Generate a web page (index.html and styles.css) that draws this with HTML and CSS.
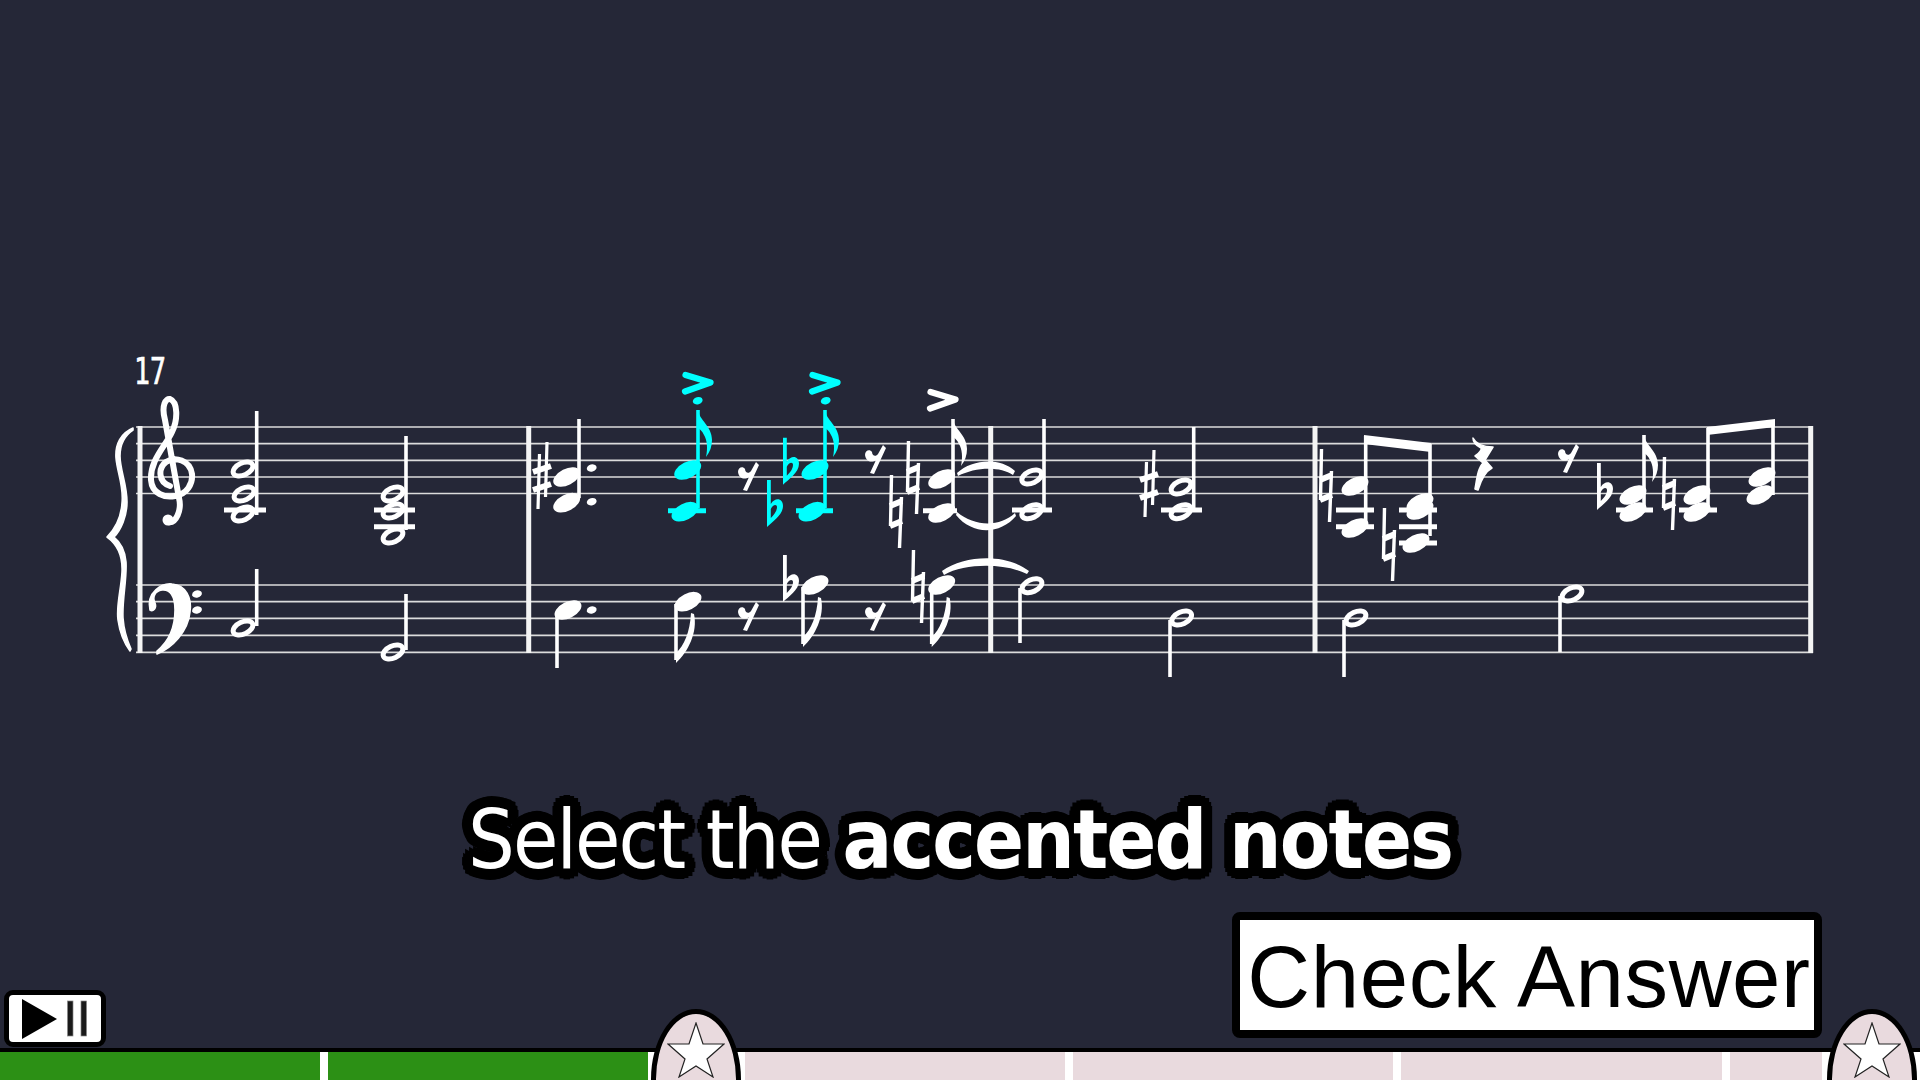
FILE: index.html
```html
<!DOCTYPE html>
<html lang="en">
<head>
<meta charset="utf-8">
<title>Select the accented notes</title>
<link rel="stylesheet" href="styles.css">
</head>
<body>
<main class="stage">
<svg class="score" viewBox="0 0 1920 700" width="1920" height="700" aria-label="Piano score, measures 17 to 20">
  <defs>
    <g id="head"><ellipse rx="14.5" ry="8.2" transform="rotate(-27)" fill="currentColor"/></g>
    <g id="open"><ellipse rx="10.5" ry="6" transform="rotate(-25)" fill="none" stroke="currentColor" stroke-width="5"/></g>
    <path id="flat" fill="currentColor" fill-rule="evenodd" d="M0 0H3.8V24C8 17 16 18 16 26C16 35 5 42 0 47ZM3.8 29V38C7 35 10 31 10 27C10 24 6 24 3.8 29Z"/>
    <g id="natural" fill="none" stroke="currentColor">
      <path stroke-width="3.4" d="M2.5 0L1.5 51M12.5 22L10.5 73"/>
      <path stroke-width="6" d="M1 31L13 26M1 51L13 46"/>
    </g>
    <g id="sharp" fill="none" stroke="currentColor">
      <path stroke-width="3.2" d="M6.5 12L5 67M14 0L12.5 55"/>
      <path stroke-width="6" d="M0 30L18 24M0 48L18 42"/>
    </g>
    <path id="rest" fill="currentColor" d="M0 10C0 5 5 4 7 7C7 11 11 12 13 9L18 0L21 3L9 29L5 28L11 15C7 18 1 17 0 10Z"/>
    <path id="flag-up" fill="currentColor" d="M0 0C1 10 14 16 14 30C14 36 12 42 8 47C10 38 9 30 6 25C4 21 2 19 0 18Z"/>
    <path id="flag-down" fill="currentColor" d="M0 3V-7C8 -14 14 -28 15 -47L18 -46C22 -28 12 -8 0 3Z"/>
    <path id="accent" fill="none" stroke="currentColor" stroke-width="6.2" stroke-linecap="round" stroke-linejoin="round" d="M3.5 3L28.5 10.5L3 19.5"/>
    <ellipse id="dot" rx="5" ry="3.6" transform="rotate(-15)" fill="currentColor"/>
  </defs>

  <g class="staff">
    <path d="M136 427H1813M136 443.7H1813M136 460.3H1813M136 477H1813M136 493.5H1813"/>
    <path d="M136 585H1813M136 601.7H1813M136 618.3H1813M136 635.3H1813M136 652.3H1813"/>
  </g>
  <g class="bars">
    <path d="M140 426V653M528.7 426V653M990.7 426V653M1315 426V653M1810.7 426V653"/>
  </g>

  <path class="ink solid heavy" d="M133 428C121 433 115 444 116 458C117 472 124 486 122 503C121 518 114 530 107 537C114 542 123 552 122 572C121 590 116 606 118 620C120 634 124 643 130 651L131 649C127 640 124 632 123 618C122 600 127 580 126 562C125 549 119 541 114 537C121 530 127 516 127 502C127 484 120 470 120 456C120 445 124 436 133 430Z"/>

  <text class="barnum" x="134" y="384" textLength="32" lengthAdjust="spacingAndGlyphs">17</text>

  <g class="ink">
    <!-- clefs -->
    <path class="clef" d="M168 522C176 524 182 510 179 498L165 420C161 405 166 398 170 399C178 402 178 420 172 432C165 447 150 460 151 480C152 494 165 498 175 496C187 494 193 484 192 474C190 460 175 456 166 462C158 468 158 482 170 486"/>
    <circle class="solid" cx="168" cy="520" r="5.5"/>
    <path class="solid heavy" d="M150 610C146 592 162 583 172 584C186 585 192 598 190 612C188 632 172 648 157 654L157 651C168 642 175 628 175 610C175 596 170 589 162 590C155 591 152 597 155 603C157 608 153 612 150 610Z"/>
    <use href="#dot" x="197" y="594"/>
    <use href="#dot" x="197" y="610"/>

    <!-- measure 17 treble -->
    <path class="stem" d="M256.7 411V515M406 436V530"/>
    <path class="ledger" d="M224 510H266M374 510H415M374 526.7H415"/>
    <use href="#open" x="243" y="469"/><use href="#open" x="244" y="494"/><use href="#open" x="243" y="514"/>
    <use href="#open" x="393" y="494"/><use href="#open" x="393" y="511"/><use href="#open" x="393" y="536"/>
    <!-- measure 17 bass -->
    <path class="stem" d="M256.7 569V626M406 594V650"/>
    <use href="#open" x="243" y="628"/><use href="#open" x="393" y="652"/>

    <!-- measure 18 treble -->
    <use href="#sharp" x="533" y="442"/>
    <use href="#head" x="566.7" y="477"/><use href="#head" x="566.7" y="502.7"/>
    <path class="stem" d="M579 419V498"/>
    <use href="#dot" x="591.7" y="468"/><use href="#dot" x="591.7" y="501.7"/>
    <use href="#rest" x="738" y="462"/>
    <use href="#rest" x="865" y="445"/>
    <use href="#natural" x="889" y="475"/>
    <use href="#natural" x="906" y="441"/>
    <use href="#head" x="941.7" y="479"/><use href="#head" x="941.7" y="513"/>
    <path class="stem" d="M953 419V510"/>
    <use href="#flag-up" x="953" y="419"/>
    <path class="ledger" d="M923 510.7H957"/>
    <use href="#accent" x="927" y="389"/>

    <!-- measure 18 bass -->
    <use href="#head" x="568" y="610"/>
    <path class="stem" d="M557 612V668"/>
    <use href="#dot" x="591.7" y="610"/>
    <use href="#head" x="688" y="601.7"/>
    <path class="stem" d="M676 604V660"/><use href="#flag-down" x="676" y="660"/>
    <use href="#rest" x="738" y="602"/>
    <use href="#flat" x="783" y="555"/>
    <use href="#head" x="815" y="585"/>
    <path class="stem" d="M803 587V644"/><use href="#flag-down" x="803" y="644"/>
    <use href="#rest" x="865" y="602"/>
    <use href="#natural" x="911" y="550"/>
    <use href="#head" x="941.7" y="585"/>
    <path class="stem" d="M931.7 587V644"/><use href="#flag-down" x="931.7" y="644"/>

    <!-- ties -->
    <path class="solid" d="M957 473C972 459 1000 457 1015 471L1013 475C1000 466 975 467 958 476Z"/>
    <path class="solid" d="M957 512C975 527 1000 527 1015 513L1016 516C1000 535 972 535 956 515Z"/>
    <path class="solid" d="M942 571C965 555 1005 553 1029 571L1027 574C1005 563 965 563 944 575Z"/>

    <!-- measure 19 -->
    <use href="#open" x="1031.7" y="477"/><use href="#open" x="1031.7" y="511.7"/>
    <path class="stem" d="M1044 419V510"/>
    <path class="ledger" d="M1012 510H1052M1161 510H1202"/>
    <use href="#sharp" x="1140" y="450"/>
    <use href="#open" x="1181" y="487"/><use href="#open" x="1181" y="511.7"/>
    <path class="stem" d="M1193.7 427V510"/>
    <use href="#open" x="1032" y="585.7"/>
    <path class="stem" d="M1020 588V643"/>
    <use href="#open" x="1181.7" y="618"/>
    <path class="stem" d="M1170 620V677"/>

    <!-- measure 20 treble -->
    <use href="#natural" x="1319" y="449"/>
    <use href="#head" x="1355" y="486"/><use href="#head" x="1355" y="528"/>
    <path class="stem thin" d="M1365.7 436V522M1430 444V536"/>
    <polygon class="solid" points="1364,435 1431,443 1431,452 1364,444"/>
    <path class="ledger" d="M1336 510H1374M1336 526.7H1374M1399 510H1437M1399 526.7H1437M1399 543H1437"/>
    <use href="#natural" x="1382" y="508"/>
    <use href="#head" x="1420" y="503"/><use href="#head" x="1420" y="510"/><use href="#head" x="1416" y="543"/>
    <path class="solid heavy" d="M1473 438C1476 444 1482 447 1493 447L1485 460L1492 468C1486 471 1481 480 1478 490L1475 489C1477 478 1478 468 1483 463L1475 456C1480 453 1482 449 1481 448C1477 446 1473 443 1473 438Z"/>
    <use href="#rest" x="1558" y="444"/>
    <use href="#flat" x="1597" y="463"/>
    <use href="#head" x="1633" y="495"/><use href="#head" x="1633" y="512"/>
    <path class="stem" d="M1644 435V510"/><use href="#flag-up" x="1644" y="435"/>
    <path class="ledger" d="M1616 510H1653M1679 510H1717"/>
    <use href="#natural" x="1662" y="457"/>
    <use href="#head" x="1697" y="495"/><use href="#head" x="1697" y="512"/>
    <path class="stem thin" d="M1708 428V510M1773 420V495"/>
    <polygon class="solid" points="1707,427 1775,419 1775,427 1707,435"/>
    <use href="#head" x="1762" y="477"/><use href="#head" x="1760" y="495"/>
    <use href="#open" x="1572" y="594"/>
    <path class="stem" d="M1560 596V652"/>
    <use href="#open" x="1356" y="618"/>
    <path class="stem" d="M1344 620V677"/>
  </g>

  <g class="ink cyan">
    <use href="#accent" x="682" y="372"/>
    <use href="#dot" x="697.7" y="400.7"/>
    <path class="stem" d="M698 410V508"/><use href="#flag-up" x="698" y="410"/>
    <use href="#head" x="687.7" y="470"/><use href="#head" x="685" y="511.7"/>
    <path class="ledger" d="M668 510.7H706"/>
    <use href="#flat" x="767" y="480"/>
    <use href="#flat" x="783" y="437.7"/>
    <use href="#accent" x="809" y="372"/>
    <use href="#dot" x="825.7" y="400.7"/>
    <path class="stem" d="M825 410V508"/><use href="#flag-up" x="825" y="410"/>
    <use href="#head" x="815" y="470"/><use href="#head" x="812" y="511.7"/>
    <path class="ledger" d="M796 510.7H833"/>
  </g>
</svg>

<h1 class="prompt">Select the <strong>accented notes</strong></h1>

<div class="controls">
  <button class="play" type="button" aria-label="Play or pause">
    <svg class="play-icon" viewBox="0 0 66 40" width="66" height="40">
      <polygon points="0,0 35,20 0,40"/>
      <rect x="45.5" y="2" width="5.5" height="35"/>
      <rect x="59" y="2" width="5.5" height="35"/>
    </svg>
  </button>
  <button class="check" type="button">Check Answer</button>
</div>

<div class="progress">
  <div class="seg done"></div>
  <div class="seg done"></div>
  <div class="seg star-cell">
    <div class="bubble">
      <svg class="star" viewBox="0 0 58 56" width="58" height="56"><polygon points="29,1 36,22 57,22 40,37 46,55 29,44 12,55 18,37 1,22 22,22"/></svg>
    </div>
  </div>
  <div class="seg"></div>
  <div class="seg"></div>
  <div class="seg wide"></div>
  <div class="seg short"></div>
  <div class="seg star-cell">
    <div class="bubble">
      <svg class="star" viewBox="0 0 58 56" width="58" height="56"><polygon points="29,1 36,22 57,22 40,37 46,55 29,44 12,55 18,37 1,22 22,22"/></svg>
    </div>
  </div>
</div>
</main>
</body>
</html>
```
FILE: styles.css
```css
* { box-sizing: border-box; }
html, body { margin: 0; padding: 0; }
body { background: #252737; }
.stage {
  width: 1920px;
  height: 1080px;
  overflow: hidden;
  display: flex;
  flex-direction: column;
  background: #252737;
  font-family: "Liberation Sans", Arial, sans-serif;
}
.score { display: block; flex: none; color: #fff; }
.staff path { fill: none; stroke: #dcdcdc; stroke-width: 1.7; }
.bars path { fill: none; stroke: #f4f4f4; stroke-width: 5; }
.ink { color: #fff; }
.cyan { color: #00ffff; }
.solid { fill: currentColor; }
.heavy { stroke: currentColor; stroke-width: 1.6; stroke-linejoin: round; }
.clef { fill: none; stroke: currentColor; stroke-width: 6; stroke-linecap: round; }
.stem { fill: none; stroke: currentColor; stroke-width: 3.6; }
.ledger { fill: none; stroke: currentColor; stroke-width: 5; }
.barnum {
  font-family: "DejaVu Sans Mono", monospace;
  font-size: 38px;
  fill: #fff;
  stroke: #fff;
  stroke-width: 0.7;
}
.prompt {
  margin: 0;
  height: 212px;
  flex: none;
  padding-top: 90px;
  text-align: center;
  font-family: "DejaVu Sans", sans-serif;
  font-stretch: condensed;
  font-size: 82px;
  font-weight: 400;
  line-height: 100px;
  letter-spacing: -1.9px;
  color: #fff;
  text-shadow:
    11px 0 #000, 10px 4px #000, 8px 8px #000, 4px 10px #000,
    0 11px #000, -4px 10px #000, -8px 8px #000, -10px 4px #000,
    -11px 0 #000, -10px -4px #000, -8px -8px #000, -4px -10px #000,
    0 -11px #000, 4px -10px #000, 8px -8px #000, 10px -4px #000,
    5px 0 #000, -5px 0 #000, 0 5px #000, 0 -5px #000;
}
.prompt strong { font-weight: 700; }
.controls {
  flex: none;
  height: 136px;
  display: flex;
  justify-content: space-between;
  align-items: flex-end;
  padding: 0 98px 0 4px;
}
.play {
  width: 102px;
  height: 57px;
  margin-bottom: 1px;
  padding: 0 0 0 13px;
  display: flex;
  align-items: center;
  background: #fff;
  border: 5px solid #000;
  border-radius: 9px;
  cursor: pointer;
}
.play-icon { fill: #000; display: block; }
.play-icon rect { fill: #1a1a1a; stroke: #888; stroke-width: 0.7; }
.check {
  width: 590px;
  height: 126px;
  margin-bottom: 10px;
  padding: 4px 0 0 4px;
  background: #fff;
  border: 8px solid #000;
  border-radius: 8px;
  font-family: "Liberation Sans", Arial, sans-serif;
  font-size: 87px;
  letter-spacing: 0.6px;
  color: #000;
  cursor: pointer;
  white-space: nowrap;
}
.progress {
  flex: none;
  height: 32px;
  display: flex;
  gap: 8px;
  border-top: 4px solid #000;
  background: #fff;
}
.seg { flex: none; width: 320px; background: #e9dade; }
.seg.wide { width: 321px; }
.seg.done { background: #2c9015; }
.seg.short { width: 92px; }
.star-cell { width: 81px; position: relative; }
.bubble {
  position: absolute;
  left: -5px;
  top: -43px;
  width: 90px;
  height: 140px;
  border: 5px solid #000;
  border-radius: 50%;
  background: #e9dade;
}
.star-cell:last-child .bubble { left: -3px; }
.star {
  position: absolute;
  left: 11px;
  top: 8px;
  fill: #fff;
  stroke: #222;
  stroke-width: 1.2;
  stroke-linejoin: miter;
}
```
